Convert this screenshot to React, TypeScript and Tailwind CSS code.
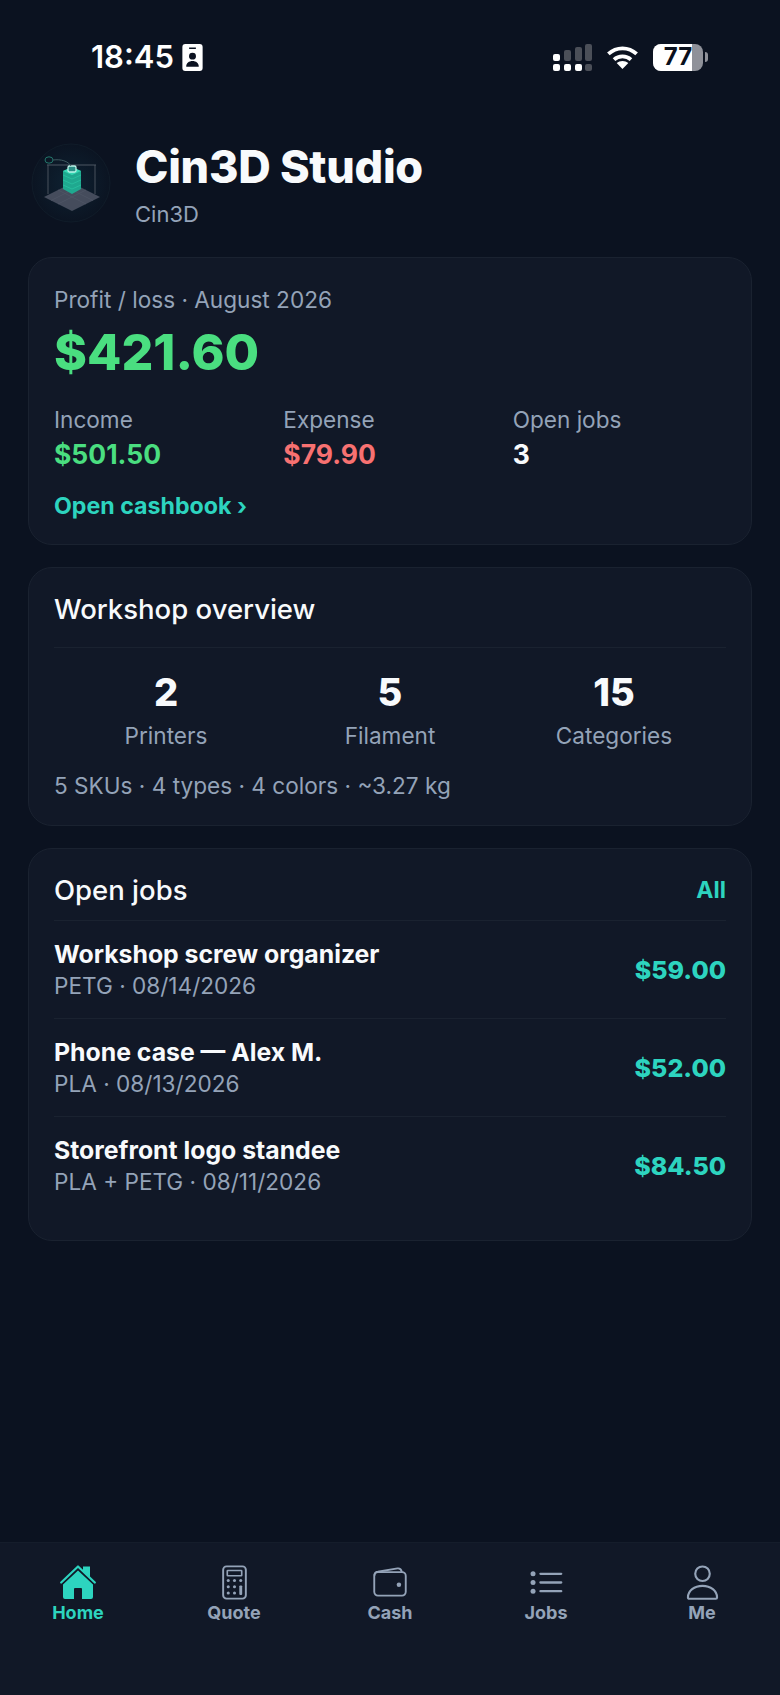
import React from "react";

function IdBadge() {
  return (
    <svg width="21" height="27" viewBox="0 0 21 28">
      <path
        fillRule="evenodd"
        fill="#fff"
        d="M3 0h15a3 3 0 0 1 3 3v22a3 3 0 0 1-3 3H3a3 3 0 0 1-3-3V3a3 3 0 0 1 3-3Zm4 3.500v1.600h7V3.500H7ZM10.500 9a3.600 3.600 0 1 0 0 7.200 3.600 3.600 0 0 0 0-7.200ZM4 23.500h13c0-3.600-2.800-5.800-6.500-5.800S4 19.900 4 23.500Z"
      />
    </svg>
  );
}

function SignalIcon() {
  return (
    <svg width="39" height="27" viewBox="0 0 39 27">
      <rect x="0" y="10" width="7" height="7" rx="2" fill="#fff" />
      <rect x="11" y="6" width="7" height="11" rx="2" fill="#4b4f58" />
      <rect x="22" y="3" width="7" height="14" rx="2" fill="#4b4f58" />
      <rect x="32" y="0" width="7" height="17" rx="2" fill="#4b4f58" />
      <rect x="0" y="20" width="7" height="7" rx="2" fill="#fff" />
      <rect x="11" y="20" width="7" height="7" rx="2" fill="#fff" />
      <rect x="22" y="20" width="7" height="7" rx="2" fill="#fff" />
      <rect x="32" y="20" width="7" height="7" rx="2" fill="#4b4f58" />
    </svg>
  );
}

function WifiIcon() {
  return (
    <svg width="33" height="24" viewBox="1 0 32 25.500" fill="none" stroke="#fff" strokeWidth="4">
      <path d="M2 9.500C10.500 1.500 23.500 1.500 32 9.500" />
      <path d="M8 15.500c5-4.600 13-4.600 18 0" />
      <path fill="#fff" stroke="none" d="M17 25.500l-6.200-6.300c3.500-3 8.900-3 12.400 0L17 25.500Z" />
    </svg>
  );
}

function BatteryIcon() {
  return (
    <div className="flex items-center">
      <div className="relative flex h-[27px] w-[50px] items-center justify-center overflow-hidden rounded-[8px] bg-[#8f9199]">
        <div className="absolute inset-y-0 left-0 w-[39px] bg-white" />
        <span className="relative text-[24px] font-bold leading-none text-[#0a101c]">77</span>
      </div>
      <div className="ml-[2px] h-[10px] w-[3px] rounded-r-full bg-[#8f9199]" />
    </div>
  );
}

function Logo() {
  return (
    <svg width="82" height="82" viewBox="0 0 82 82" fill="none">
      <defs>
        <radialGradient id="logoGlow">
          <stop offset="0%" stopColor="#0e2232" />
          <stop offset="100%" stopColor="#0b1422" />
        </radialGradient>
      </defs>
      <circle cx="41" cy="41" r="39" fill="url(#logoGlow)" stroke="#101c29" strokeWidth="1" />
      <path d="M18 23V52M65 23V52" stroke="#3f4854" strokeWidth="1.200" />
      <path d="M17 23H66" stroke="#4d5763" strokeWidth="1.200" />
      <path d="M42 69L14 55 42 41 70 55 42 69Z" fill="#454c5c" />
      <path d="M28 48L56 62M35 44.500L63 58.500M56 48L28 62M49 44.500L21 58.500" stroke="#4f5666" strokeWidth="0.700" />
      <path d="M33 29l9-4 9 4v18l-9 5-9-5V29Z" fill="#1fa88f" />
      <path d="M33 33l9 4 9-4M33 38l9 4 9-4M33 43l9 4 9-4" stroke="#27bd9e" strokeWidth="1" />
      <path d="M33 29l9 4 9-4-9-4-9 4Z" fill="#34d6b2" />
      <rect x="38" y="24" width="8" height="6" rx="1.500" fill="#2a8f86" stroke="#bff5ea" strokeWidth="1.300" />
      <ellipse cx="19" cy="18" rx="4" ry="3.200" stroke="#23776c" strokeWidth="1" />
      <path d="M23 18c8-1 15 1 18 6" stroke="#3f5a60" strokeWidth="1" />
    </svg>
  );
}

function HomeIcon() {
  return (
    <svg width="36" height="34" viewBox="0 0 36 34">
      <path d="M1.200 17.500L18 1.500l16.800 16" fill="none" stroke="#2dd4bf" strokeWidth="2.200" strokeLinecap="round" strokeLinejoin="round" />
      <path d="M23 1.500h7v11l-7-6.500V1.500Z" fill="#2dd4bf" />
      <path
        fill="#2dd4bf"
        d="M18 5.500L3 19.500V32a2 2 0 0 0 2 2h9V24a1 1 0 0 1 1-1h6a1 1 0 0 1 1 1v10h9a2 2 0 0 0 2-2V19.500L18 5.500Z"
      />
    </svg>
  );
}

function QuoteIcon() {
  return (
    <svg width="25" height="35" viewBox="0 0 26 36" fill="none">
      <rect x="1.200" y="1.200" width="23.600" height="33.600" rx="3.500" stroke="#94a3b8" strokeWidth="2" />
      <rect x="5.500" y="5.500" width="15" height="5.500" rx="0.500" stroke="#94a3b8" strokeWidth="1.700" />
      <g fill="#94a3b8">
        <circle cx="6.500" cy="16" r="1.600" />
        <circle cx="13" cy="16" r="1.600" />
        <circle cx="19.500" cy="16" r="1.600" />
        <circle cx="6.500" cy="22.500" r="1.600" />
        <circle cx="13" cy="22.500" r="1.600" />
        <circle cx="6.500" cy="29" r="1.600" />
        <circle cx="13" cy="29" r="1.600" />
        <rect x="18" y="21" width="3" height="10" rx="1" />
      </g>
    </svg>
  );
}

function WalletIcon() {
  return (
    <svg width="34" height="30" viewBox="0 0 36 32" fill="none" stroke="#94a3b8" strokeWidth="2">
      <path d="M1.500 8.500A3.500 3.500 0 0 1 5 5L26 1.500c2.500-.3 4 1 4.500 3.500" strokeLinecap="round" />
      <rect x="1.200" y="5.500" width="33.600" height="25" rx="4" />
      <circle cx="27.500" cy="19" r="2.400" fill="#94a3b8" stroke="none" />
    </svg>
  );
}

function JobsIcon() {
  return (
    <svg width="33" height="25" viewBox="0 0 34 26" fill="#94a3b8">
      <circle cx="3" cy="4" r="2.600" />
      <circle cx="3" cy="13" r="2.600" />
      <circle cx="3" cy="22" r="2.600" />
      <rect x="9.500" y="2.800" width="24" height="2.400" rx="1.200" />
      <rect x="9.500" y="11.800" width="24" height="2.400" rx="1.200" />
      <rect x="9.500" y="20.800" width="24" height="2.400" rx="1.200" />
    </svg>
  );
}

function MeIcon() {
  return (
    <svg width="33" height="35" viewBox="0 0 34 36" fill="none" stroke="#94a3b8" strokeWidth="2.200">
      <circle cx="17" cy="9" r="7.500" />
      <path d="M2 33.500c0-7 6.500-12 15-12s15 5 15 12c0 .8-.6 1.300-1.300 1.300H3.300c-.7 0-1.300-.5-1.300-1.300Z" />
    </svg>
  );
}

const stats = [
  { value: "2", label: "Printers" },
  { value: "5", label: "Filament" },
  { value: "15", label: "Categories" },
];

const jobs = [
  { name: "Workshop screw organizer", meta: "PETG · 08/14/2026", price: "$59.00" },
  { name: "Phone case — Alex M.", meta: "PLA · 08/13/2026", price: "$52.00" },
  { name: "Storefront logo standee", meta: "PLA + PETG · 08/11/2026", price: "$84.50" },
];

const tabs = [
  { label: "Home", icon: <HomeIcon />, active: true },
  { label: "Quote", icon: <QuoteIcon /> },
  { label: "Cash", icon: <WalletIcon /> },
  { label: "Jobs", icon: <JobsIcon /> },
  { label: "Me", icon: <MeIcon /> },
];

export default function App() {
  return (
    <div className="flex h-[1695px] w-[780px] flex-col overflow-hidden bg-[#0b1220] font-['Inter',sans-serif] text-white">
      {/* status bar */}
      <div className="flex h-[36px] mt-[39px] items-center justify-between pl-[91px] pr-[72px]">
        <div className="flex items-center gap-[8px]">
          <span className="text-[31px] font-semibold leading-[36px]">18:45</span>
          <IdBadge />
        </div>
        <div className="flex items-center gap-[14px]">
          <SignalIcon />
          <WifiIcon />
          <BatteryIcon />
        </div>
      </div>

      {/* header */}
      <div className="mt-[67px] flex items-start gap-[23px] pl-[30px]">
        <Logo />
        <div>
          <div className="text-[45px] font-extrabold leading-[50px] tracking-[-0.3px] text-[#f8fafc]">Cin3D Studio</div>
          <div className="mt-[8px] text-[22px] leading-[28px] text-[#94a3b8]">Cin3D</div>
        </div>
      </div>

      <div className="mt-[29px] flex flex-col gap-[22px] px-[28px]">
        {/* profit card */}
        <div className="rounded-[24px] border border-[#1a2230] bg-[#111827] px-[25px] pt-[28px] pb-[24px]">
          <div className="text-[22.6px] leading-[28px] text-[#94a3b8]">Profit / loss · August 2026</div>
          <div className="mt-[8px] text-[50px] font-extrabold leading-[60px] text-[#4ade80]">$421.60</div>
          <div className="mt-[24px] grid grid-cols-3 gap-[16px]">
            <div>
              <div className="text-[22.6px] leading-[28px] text-[#94a3b8]">Income</div>
              <div className="mt-[4px] text-[26.5px] font-bold leading-[32px] text-[#4ade80]">$501.50</div>
            </div>
            <div>
              <div className="text-[22.6px] leading-[28px] text-[#94a3b8]">Expense</div>
              <div className="mt-[4px] text-[26.5px] font-bold leading-[32px] text-[#f87171]">$79.90</div>
            </div>
            <div>
              <div className="text-[22.6px] leading-[28px] text-[#94a3b8]">Open jobs</div>
              <div className="mt-[4px] text-[26.5px] font-bold leading-[32px] text-[#f8fafc]">3</div>
            </div>
          </div>
          <div className="mt-[22px] text-[23.2px] font-bold leading-[28px] text-[#2dd4bf]">Open cashbook ›</div>
        </div>

        {/* overview card */}
        <div className="rounded-[24px] border border-[#1a2230] bg-[#111827] px-[25px] pt-[24px] pb-[25px]">
          <div className="border-b border-[#1a2230] pb-[21px] text-[27.5px] font-medium leading-[34px] text-[#f8fafc]">Workshop overview</div>
          <div className="mt-[21px] grid grid-cols-3">
            {stats.map((s) => (
              <div key={s.label} className="text-center">
                <div className="text-[38px] font-extrabold leading-[46px] text-[#f8fafc]">{s.value}</div>
                <div className="mt-[6px] text-[22.6px] leading-[30px] text-[#94a3b8]">{s.label}</div>
              </div>
            ))}
          </div>
          <div className="mt-[21px] text-[22.6px] leading-[28px] text-[#94a3b8]">5 SKUs · 4 types · 4 colors · ~3.27 kg</div>
        </div>

        {/* open jobs card */}
        <div className="rounded-[24px] border border-[#1a2230] bg-[#111827] px-[25px] pt-[24px] pb-[26px]">
          <div className="flex items-center justify-between border-b border-[#1a2230] pb-[13px]">
            <div className="text-[27.5px] font-medium leading-[34px] text-[#f8fafc]">Open jobs</div>
            <div className="text-[23px] font-bold leading-[28px] text-[#2dd4bf]">All</div>
          </div>
          {jobs.map((job, i) => (
            <div key={job.name} className={i < jobs.length - 1 ? "flex items-center justify-between border-b border-[#1a2230] py-[17px]" : "flex items-center justify-between py-[17px]"}>
              <div>
                <div className="text-[24.8px] font-bold leading-[32px] text-[#f8fafc]">{job.name}</div>
                <div className="mt-[1px] text-[22.6px] leading-[30px] text-[#94a3b8]">{job.meta}</div>
              </div>
              <div className="text-[25px] font-extrabold leading-[32px] text-[#2dd4bf]">{job.price}</div>
            </div>
          ))}
        </div>
      </div>

      {/* bottom tabs */}
      <div className="mt-auto grid h-[153px] grid-cols-5 border-t border-[#151d2b] bg-[#111827] pt-[21px]">
        {tabs.map((t) => (
          <div key={t.label} className="flex flex-col items-center">
            <div className="flex h-[36px] items-center justify-center">{t.icon}</div>
            <div className={t.active ? "mt-[2px] text-[18px] font-bold leading-[22px] text-[#2dd4bf]" : "mt-[2px] text-[18px] font-bold leading-[22px] text-[#94a3b8]"}>{t.label}</div>
          </div>
        ))}
      </div>
    </div>
  );
}
